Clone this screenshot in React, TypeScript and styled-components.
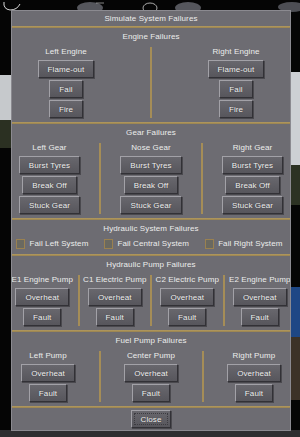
import React from 'react';
import styled, { createGlobalStyle } from 'styled-components';

const GlobalStyle = createGlobalStyle`
  html, body {
    margin: 0;
    padding: 0;
    background: #050505;
  }
  * {
    box-sizing: border-box;
  }
`;

const Page = styled.div`
  position: relative;
  width: 300px;
  height: 437px;
  overflow: hidden;
  padding: 10px 9px 0 11px;
  font-family: "Liberation Sans", Arial, sans-serif;
  background:
    linear-gradient(to bottom, transparent 75px, #c6c9cc 75px, #c6c9cc 120px, #2b3022 120px, #2b3022 148px, transparent 148px) left top / 11px 100% no-repeat,
    linear-gradient(to bottom, transparent 72px, #cdd0d4 72px, #cdd0d4 165px, #2c3223 165px, #2c3223 205px, transparent 205px, transparent 287px, #1e4785 287px, #1e4785 337px, #3c3227 337px, #3c3227 400px, transparent 400px) right top / 9px 100% no-repeat,
    linear-gradient(to bottom, transparent 430px, #2e2e30 430px) left top / 100% 100% no-repeat,
    #050505;
`;

const SkyDrawing = styled.svg`
  position: absolute;
  left: 0;
  top: 0;
`;

const Dialog = styled.div`
  position: relative;
  width: 280px;
  height: 421px;
  overflow: hidden;
  display: flex;
  flex-direction: column;
  background: #6d6c72;
  border: 1px solid #8b8a90;
  color: #ececec;
  font-size: 8px;
  line-height: 1;
  letter-spacing: 0.1px;
`;

const TitleBar = styled.div`
  height: 15px;
  display: flex;
  align-items: center;
  justify-content: center;
  padding-top: 1px;
`;

const GoldRule = styled.div`
  height: 2px;
  flex: none;
  background: linear-gradient(#b49b60, #97814f);
`;

const Section = styled.div`
  display: flex;
  flex-direction: column;
  padding-bottom: 4px;
`;

const SectionTitle = styled.div`
  height: 18px;
  display: flex;
  align-items: center;
  justify-content: center;
`;

const Columns = styled.div`
  display: flex;
  justify-content: center;
`;

const Column = styled.div<{ $w: number }>`
  flex: none;
  width: ${p => p.$w}px;
  display: flex;
  flex-direction: column;
  align-items: center;
  gap: 2px;
`;

const Divider = styled.div`
  flex: none;
  width: 2px;
  margin: 1px -1px 0;
  background: #a58d57;
`;

const ColLabel = styled.div`
  height: 12px;
  display: flex;
  align-items: center;
  white-space: nowrap;
`;

const Button = styled.button<{ $focus?: boolean }>`
  height: 18px;
  padding: 0 9px;
  font-family: "Liberation Sans", Arial, sans-serif;
  font-size: 8px;
  letter-spacing: 0.1px;
  color: #f3f3f3;
  text-shadow: 0 0 1px rgba(0, 0, 0, 0.5);
  white-space: nowrap;
  background: linear-gradient(#68676d, #57565c);
  border: 1px solid;
  border-color: #a2a1a7 #323136 #323136 #a2a1a7;
  box-shadow: 1px 1px 0 #4a494e;
  outline: ${p => (p.$focus ? '1px dotted #3c3b40' : 'none')};
  outline-offset: -4px;
`;

const CheckRow = styled.div`
  height: 12px;
  display: flex;
  justify-content: center;
  align-items: center;
  gap: 16px;
  padding-right: 3px;
`;

const CheckItem = styled.label`
  display: flex;
  align-items: center;
  gap: 4px;
  white-space: nowrap;
`;

const CheckBox = styled.span`
  width: 9px;
  height: 10px;
  border: 1px solid #9a8150;
  background: #6a6960;
`;

const Footer = styled.div`
  display: flex;
  justify-content: center;
  padding-top: 2px;
`;

type Col = { label: string; buttons: string[] };

const ColumnGroup: React.FC<{ cols: Col[]; w: number }> = ({ cols, w }) => (
  <Columns>
    {cols.map((c, i) => (
      <React.Fragment key={c.label}>
        {i > 0 && <Divider />}
        <Column $w={w}>
          <ColLabel>{c.label}</ColLabel>
          {c.buttons.map(b => (
            <Button key={b}>{b}</Button>
          ))}
        </Column>
      </React.Fragment>
    ))}
  </Columns>
);

const engines: Col[] = [
  { label: 'Left Engine', buttons: ['Flame-out', 'Fail', 'Fire'] },
  { label: 'Right Engine', buttons: ['Flame-out', 'Fail', 'Fire'] },
];

const gears: Col[] = ['Left Gear', 'Nose Gear', 'Right Gear'].map(label => ({
  label,
  buttons: ['Burst Tyres', 'Break Off', 'Stuck Gear'],
}));

const hydPumps: Col[] = ['E1 Engine Pump', 'C1 Electric Pump', 'C2 Electric Pump', 'E2 Engine Pump'].map(label => ({
  label,
  buttons: ['Overheat', 'Fault'],
}));

const fuelPumps: Col[] = ['Left Pump', 'Center Pump', 'Right Pump'].map(label => ({
  label,
  buttons: ['Overheat', 'Fault'],
}));

export default function App() {
  return (
    <>
      <GlobalStyle />
      <Page>
        <SkyDrawing width="300" height="12" viewBox="0 0 300 12">
          <path d="M4 2 Q3 9 10 10 Q17 10 20 4" fill="none" stroke="#d8d8d8" strokeWidth="1" />
          <ellipse cx="90" cy="8" rx="13" ry="6" fill="#55565c" />
          <line x1="96" y1="3" x2="104" y2="3" stroke="#bbb" strokeWidth="0.7" />
          <ellipse cx="150" cy="8" rx="7" ry="5" fill="none" stroke="#d0d0d0" strokeWidth="0.8" />
          <ellipse cx="188" cy="8" rx="13" ry="6" fill="#55565c" />
          <ellipse cx="292" cy="7" rx="14" ry="5" fill="#4d4e54" />
        </SkyDrawing>
        <Dialog>
          <TitleBar>Simulate System Failures</TitleBar>
          <GoldRule />

          <Section>
            <SectionTitle>Engine Failures</SectionTitle>
            <ColumnGroup cols={engines} w={170} />
          </Section>
          <GoldRule />

          <Section>
            <SectionTitle>Gear Failures</SectionTitle>
            <ColumnGroup cols={gears} w={101.5} />
          </Section>
          <GoldRule />

          <Section>
            <SectionTitle>Hydraulic System Failures</SectionTitle>
            <CheckRow>
              <CheckItem><CheckBox />Fail Left System</CheckItem>
              <CheckItem><CheckBox />Fail Central System</CheckItem>
              <CheckItem><CheckBox />Fail Right System</CheckItem>
            </CheckRow>
          </Section>
          <GoldRule />

          <Section>
            <SectionTitle>Hydraulic Pump Failures</SectionTitle>
            <ColumnGroup cols={hydPumps} w={72.5} />
          </Section>
          <GoldRule />

          <Section>
            <SectionTitle>Fuel Pump Failures</SectionTitle>
            <ColumnGroup cols={fuelPumps} w={103} />
          </Section>
          <GoldRule />

          <Footer>
            <Button $focus>Close</Button>
          </Footer>
        </Dialog>
      </Page>
    </>
  );
}
